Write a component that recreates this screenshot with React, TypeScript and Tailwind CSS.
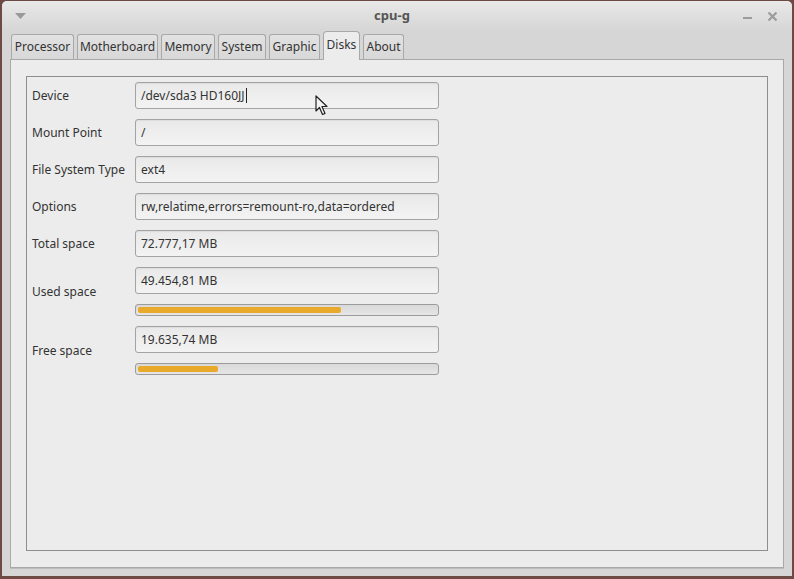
import React from "react";

const TABS = [
  { label: "Processor", w: "w-[63px]" },
  { label: "Motherboard", w: "w-[81px]" },
  { label: "Memory", w: "w-[54px]" },
  { label: "System", w: "w-[48px]" },
  { label: "Graphic", w: "w-[51px]" },
  { label: "Disks", w: "w-[37px]", active: true },
  { label: "About", w: "w-[41px]" },
];

const ROWS = [
  { label: "Device", value: "/dev/sda3 HD160JJ", caret: true },
  { label: "Mount Point", value: "/" },
  { label: "File System Type", value: "ext4" },
  { label: "Options", value: "rw,relatime,errors=remount-ro,data=ordered" },
  { label: "Total space", value: "72.777,17 MB" },
];

const TOTAL = 72777.17;

function Entry({ value, caret }: { value: string; caret?: boolean }) {
  return (
    <div className="w-[304px] h-[27px] flex items-center pl-[5px] border border-[#a3a3a3] rounded-[3px] bg-gradient-to-b from-[#e9e9e9] to-[#f3f3f3] shadow-[inset_0_1px_1px_rgba(0,0,0,0.06)] text-[12px] text-[#333333]">
      <span>{value}</span>
      {caret && <span className="ml-[1px] w-px h-[15px] bg-[#222222]" />}
    </div>
  );
}

function Bar({ value }: { value: number }) {
  const pct = (value / TOTAL) * 100;
  return (
    <div className="w-[304px] h-[12px] p-[2px] border border-[#9c9c9c] rounded-[3px] bg-gradient-to-b from-[#d9d9d9] to-[#e6e6e6]">
      <div
        className="h-full rounded-[2px] bg-[#e9a92b]"
        style={{ width: `${pct}%` }}
      />
    </div>
  );
}

export default function App() {
  return (
    <div
      className="w-[794px] h-[579px] bg-[#6e4a45] pt-px px-[2px] overflow-hidden"
      style={{ fontFamily: '"Noto Sans", "Open Sans", sans-serif' }}
    >
      <div className="relative h-[575px] flex flex-col bg-[#d6d6d6] rounded-t-[5px] overflow-hidden">
        {/* title bar */}
        <div className="h-[30px] flex items-center px-[12px] bg-gradient-to-b from-[#e8e8e8] to-[#d6d6d6] shrink-0">
          <svg width="11" height="7" viewBox="0 0 11 7" className="ml-[1px]">
            <polygon points="0,0 11,0 5.5,6" fill="#9a9a9a" />
          </svg>
          <div className="flex-1 text-center text-[13px] font-bold text-[#555555] pl-[16px]">cpu-g</div>
          <div className="flex items-center gap-[14px] pr-[2px]">
            <svg width="11" height="11" viewBox="0 0 11 11">
              <rect x="1" y="6" width="9" height="2" fill="#9c9c9c" />
            </svg>
            <svg width="11" height="11" viewBox="0 0 11 11">
              <path d="M1.5 1.5 L9.5 9.5 M9.5 1.5 L1.5 9.5" stroke="#9c9c9c" strokeWidth="2.2" />
            </svg>
          </div>
        </div>

        {/* notebook */}
        <div className="flex-1 flex flex-col px-[8px] pb-[8px]">
          <div className="h-[28px] flex items-end gap-[3px] pl-px shrink-0">
            {TABS.map((t) =>
              t.active ? (
                <div
                  key={t.label}
                  className={`${t.w} h-[29px] -mb-px z-10 flex items-center justify-center pb-[3px] border border-b-0 border-[#a8a8a8] rounded-t-[4px] bg-[#ececec] text-[12px] text-[#333333]`}
                >
                  {t.label}
                </div>
              ) : (
                <div
                  key={t.label}
                  className={`${t.w} h-[25px] flex items-center justify-center border border-b-0 border-[#a8a8a8] rounded-t-[3px] bg-gradient-to-b from-[#e2e2e2] to-[#d8d8d8] text-[12px] text-[#333333]`}
                >
                  {t.label}
                </div>
              )
            )}
          </div>

          <div className="flex-1 border border-[#a9a9a9] bg-[#ececec] px-[15px] pt-[16px] pb-[16px] shadow-[0_1px_0_#bdbdbd]">
            <div className="h-full border border-[#8e8e8e] pl-[5px] pt-[5px] flex flex-col gap-[10px]">
              {ROWS.map((r) => (
                <div key={r.label} className="flex items-center">
                  <div className="w-[103px] text-[12px] text-[#333333]">{r.label}</div>
                  <Entry value={r.value} caret={r.caret} />
                </div>
              ))}
              <div className="flex items-center">
                <div className="w-[103px] text-[12px] text-[#333333]">Used space</div>
                <div className="flex flex-col gap-[10px]">
                  <Entry value="49.454,81 MB" />
                  <Bar value={49454.81} />
                </div>
              </div>
              <div className="flex items-center">
                <div className="w-[103px] text-[12px] text-[#333333]">Free space</div>
                <div className="flex flex-col gap-[10px]">
                  <Entry value="19.635,74 MB" />
                  <Bar value={19635.74} />
                </div>
              </div>
            </div>
          </div>
        </div>

        {/* mouse pointer */}
        <svg
          className="absolute left-[313px] top-[94px]"
          width="14"
          height="21"
          viewBox="0 0 14 21"
        >
          <path
            d="M1 1 L1 16 L4.5 12.5 L7.5 19.5 L10 18.5 L7 11.5 L12 11.5 Z"
            fill="#f4f4f4"
            stroke="#222222"
            strokeWidth="1.2"
            strokeLinejoin="round"
          />
        </svg>
      </div>
    </div>
  );
}
